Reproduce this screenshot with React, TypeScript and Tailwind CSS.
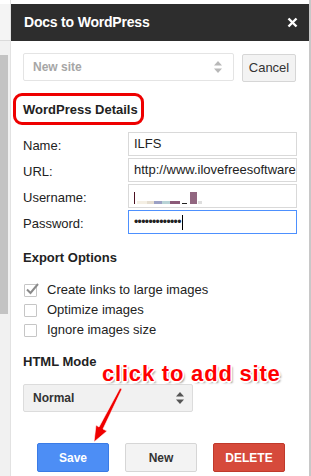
import React from "react";

const font = { fontFamily: '"Liberation Sans", Arial, sans-serif' };

function Arrows({ color }: { color: string }) {
  return (
    <svg width="8" height="12" viewBox="0 0 8 12">
      <polygon points="4,0 8,4.5 0,4.5" fill={color} />
      <polygon points="0,7.5 8,7.5 4,12" fill={color} />
    </svg>
  );
}

function Field({ label, children, active }: { label: string; children: React.ReactNode; active?: boolean }) {
  return (
    <div className="flex items-center h-[24px] min-w-0">
      <div className="w-[105px] shrink-0 text-[13px] text-[#222] pt-[4px]">{label}</div>
      <div
        className={
          "flex-1 min-w-0 h-[24px] flex items-center px-[5px] text-[13px] text-[#222] overflow-hidden whitespace-nowrap bg-white " +
          (active ? "border border-[#4d90fe]" : "border border-[#d9d9d9]")
        }
      >
        {children}
      </div>
    </div>
  );
}

function Check({ checked, label }: { checked?: boolean; label: string }) {
  return (
    <div className="flex items-center h-[20px]">
      <div className="w-[13px] h-[13px] border border-[#c6c6c6] rounded-[1px] bg-white relative ml-[1px]">
        {checked && (
          <svg className="absolute -top-[3px] left-[0px]" width="15" height="14" viewBox="0 0 15 14">
            <path d="M2 7.5 L5.5 11 L13 2" fill="none" stroke="#8a8a8a" strokeWidth="2" />
          </svg>
        )}
      </div>
      <span className="ml-[10px] text-[13px] text-[#222]">{label}</span>
    </div>
  );
}

export default function App() {
  return (
    <div className="relative w-[311px] h-[476px] bg-white flex overflow-hidden" style={font}>
      {/* left strip */}
      <div className="w-[11px] shrink-0 h-full flex flex-col bg-[#f1f1f1] border-r border-[#e2e2e2]">
        <div className="h-[4px] bg-white" />
        <div className="h-[37px] bg-[#f4f4f4] border-b border-[#dadada]" />
        <div className="h-[14px]" />
        <div className="w-[8px] h-[259px] bg-[#c3c3c3]" />
      </div>

      {/* dialog */}
      <div className="flex-1 min-w-0 flex flex-col border-r-2 border-[#c8c8c8]">
        <div className="h-[4px] bg-white" />
        <div className="h-[37px] bg-[#2d2d2d] flex items-center justify-between pl-[13px] pr-[11px]">
          <span className="text-white font-bold text-[14px] tracking-[-0.2px]">Docs to WordPress</span>
          <svg width="11" height="11" viewBox="0 0 11 11">
            <path d="M1.5 1.5 L9.5 9.5 M9.5 1.5 L1.5 9.5" stroke="#fff" strokeWidth="2.4" />
          </svg>
        </div>

        <div className="pl-[12px] pr-[12px] flex flex-col min-w-0">
          {/* site select row */}
          <div className="flex items-start mt-[12px]">
            <div className="w-[211px] shrink-0 h-[28px] border border-[#e4e4e4] rounded-[2px] flex items-center justify-between pl-[9px] pr-[11px]">
              <span className="text-[12px] font-bold text-[#a6a6a6]">New site</span>
              <Arrows color="#b8b8b8" />
            </div>
            <div className="ml-[8px] mt-[1px] w-[54px] shrink-0 h-[28px] bg-[#f3f3f3] border border-[#d6d6d6] rounded-[2px] flex items-center justify-center text-[13px] text-[#333]">
              Cancel
            </div>
          </div>

          {/* WordPress details heading */}
          <div className="relative mt-[19px] h-[18px] flex items-center">
            <span className="text-[13px] font-bold text-[#222]">WordPress Details</span>
            <div className="absolute left-[-10px] top-[-8px] w-[131px] h-[32px] border-[3px] border-[#ee0000] rounded-[9px]" />
          </div>

          {/* fields */}
          <div className="flex flex-col gap-[2px] mt-[13px] min-w-0">
            <Field label="Name:">ILFS</Field>
            <Field label="URL:">http://www.ilovefreesoftware.com</Field>
            <Field label="Username:">
              <span className="flex items-end h-[13px] mt-[2px]">
                <span className="w-[1px] h-[12px] bg-[#4a1020]" />
                <span className="w-[2px] h-[3px]" />
                <span className="w-[10px] h-[3px] bg-[#f4efe4]" />
                <span className="w-[7px] h-[3px] bg-[#e4ddd0]" />
                <span className="w-[8px] h-[3px] bg-[#9aa0c4]" />
                <span className="w-[8px] h-[3px] bg-[#b8d3d6]" />
                <span className="w-[10px] h-[3px] bg-[#8b5a78]" />
                <span className="w-[2px] h-[3px]" />
                <span className="w-[5px] h-[1px] bg-[#222]" />
                <span className="w-[3px] h-[3px]" />
                <span className="w-[7px] h-[12px] bg-[#916680]" />
                <span className="w-[1px] h-[3px]" />
                <span className="w-[4px] h-[3px] bg-[#dedede]" />
              </span>
            </Field>
            <Field label="Password:" active>
              <span className="tracking-[-0.6px] text-[12px]">•••••••••••••</span>
              <span className="w-[1px] h-[15px] bg-black ml-[1px]" />
            </Field>
          </div>

          {/* export options */}
          <div className="mt-[16px] text-[13px] font-bold text-[#222] h-[16px] leading-[16px]">Export Options</div>
          <div className="flex flex-col mt-[14px]">
            <Check checked label="Create links to large images" />
            <Check label="Optimize images" />
            <Check label="Ignore images size" />
          </div>

          {/* HTML mode */}
          <div className="mt-[14px] text-[13px] font-bold text-[#222] h-[16px] leading-[16px]">HTML Mode</div>
          <div className="mt-[14px] w-[170px] h-[28px] bg-[#f1f1f1] border border-[#dcdcdc] rounded-[2px] flex items-center justify-between pl-[9px] pr-[8px]">
            <span className="text-[12px] font-bold text-[#333]">Normal</span>
            <Arrows color="#555" />
          </div>

          {/* buttons */}
          <div className="mt-[31px] flex justify-center gap-[16px] pl-[2px]">
            <div className="w-[72px] h-[29px] bg-[#4d8ef5] border border-[#3a7be6] rounded-[2px] flex items-center justify-center text-white font-bold text-[12px]">
              Save
            </div>
            <div className="w-[72px] h-[29px] bg-[#f3f3f3] border border-[#d6d6d6] rounded-[2px] flex items-center justify-center text-[#333] font-bold text-[12px]">
              New
            </div>
            <div className="w-[72px] h-[29px] bg-[#d64a3b] border border-[#c0392b] rounded-[2px] flex items-center justify-center text-white font-bold text-[12px]">
              DELETE
            </div>
          </div>
        </div>
      </div>

      {/* annotation */}
      <div
        className="absolute left-[102px] top-[362px] text-[22px] font-bold text-[#ff0000] leading-[24px] tracking-[0.8px] whitespace-nowrap"
        style={{
          textShadow:
            "1.5px 0 0 #fff, -1.5px 0 0 #fff, 0 1.5px 0 #fff, 0 -1.5px 0 #fff, 1px 1px 0 #fff, -1px -1px 0 #fff, 1px -1px 0 #fff, -1px 1px 0 #fff, 2px 2px 2px #999",
        }}
      >
        click to add site
      </div>
      <svg className="absolute left-[88px] top-[386px]" width="40" height="60" viewBox="0 0 40 60">
        <polygon points="32,2 34,3 15,43 19,45 6,56 8,39 11,41" fill="#f00000" stroke="#ffffff" strokeWidth="0.6" />
      </svg>
    </div>
  );
}
